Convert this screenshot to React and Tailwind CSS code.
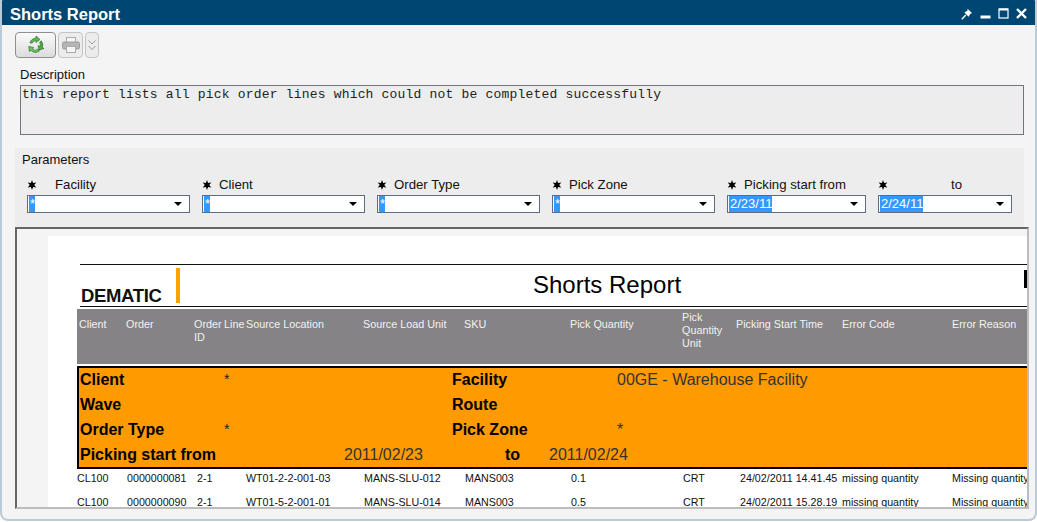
import React from "react";

const params = [
  { label: "Facility", value: "*", labelClass: "ml-[18px]", width: "w-[163px]", gap: "mr-[12px]" },
  { label: "Client", value: "*", labelClass: "ml-[7px]", width: "w-[163px]", gap: "mr-[12px]" },
  { label: "Order Type", value: "*", labelClass: "ml-[7px]", width: "w-[163px]", gap: "mr-[12px]" },
  { label: "Pick Zone", value: "*", labelClass: "ml-[7px]", width: "w-[163px]", gap: "mr-[12px]" },
  { label: "Picking start from", value: "2/23/11", labelClass: "ml-[7px]", width: "w-[139px]", gap: "mr-[12px]" },
  { label: "to", value: "2/24/11", labelClass: "ml-[63px]", width: "w-[134px]", gap: "" },
];

const rows = [
  ["CL100", "0000000081", "2-1", "WT01-2-2-001-03", "MANS-SLU-012", "MANS003", "0.1", "CRT", "24/02/2011 14.41.45", "missing quantity", "Missing quantity"],
  ["CL100", "0000000090", "2-1", "WT01-5-2-001-01", "MANS-SLU-014", "MANS003", "0.5", "CRT", "24/02/2011 15.28.19", "missing quantity", "Missing quantity"],
];

const rowWidths = ["w-[50px]", "w-[70px]", "w-[49px]", "w-[118px]", "w-[101px]", "w-[106px]", "w-[112px]", "w-[57px]", "w-[102px]", "w-[110px]", "w-[76px]"];

const Star = () => (
  <svg width="10" height="10" viewBox="0 0 10 10" className="shrink-0">
    <path d="M5 0 L6.1 3 L9.3 2.5 L7.2 5 L9.3 7.5 L6.1 7 L5 10 L3.9 7 L0.7 7.5 L2.8 5 L0.7 2.5 L3.9 3 Z" fill="#000" />
  </svg>
);

const RefreshIcon = () => (
  <svg width="20" height="20" viewBox="0 0 20 20">
    <path d="M4 8 A6.5 6.5 0 0 1 10 3.2 L10 1 L14 4.5 L10 7.5 L10 5.6 A4 4 0 0 0 6.3 8 Z" fill="#55c13f" stroke="#33663a" strokeWidth="0.7" />
    <path d="M15.2 5.8 A6.5 6.5 0 0 1 16.2 12.6 L18 13.4 L13 15.2 L12.2 10.6 L14 11.5 A4 4 0 0 0 13.6 7.6 Z" fill="#4bb338" stroke="#33663a" strokeWidth="0.7" />
    <path d="M13 16.3 A6.5 6.5 0 0 1 5 15.2 L3.4 16.6 L2.8 11.4 L7.6 12.6 L6.4 13.8 A4 4 0 0 0 12 14.2 Z" fill="#6ad04c" stroke="#33663a" strokeWidth="0.7" />
  </svg>
);

const PrinterIcon = () => (
  <svg width="18" height="16" viewBox="0 0 18 16">
    <rect x="4.5" y="0.5" width="9" height="5" fill="#f6f6f6" stroke="#aaa" />
    <rect x="0.5" y="5" width="17" height="7" rx="1.5" fill="#b5b5b5" stroke="#9c9c9c" />
    <rect x="4.5" y="9.5" width="9" height="6" fill="#f6f6f6" stroke="#aaa" />
  </svg>
);

const ChevronIcon = () => (
  <svg width="8" height="11" viewBox="0 0 8 11" fill="none" stroke="#9a9a9a">
    <path d="M0.5 0.5 L4 4 L7.5 0.5" />
    <path d="M0.5 6 L4 9.5 L7.5 6" />
  </svg>
);

const PinIcon = () => (
  <svg width="12" height="12" viewBox="0 0 12 12">
    <path d="M6.5 0.8 L11.2 5.2 L9.6 5.6 L7.6 8.8 L3.4 4.4 L6.6 2.4 Z" fill="#fff" />
    <path d="M4.8 7 L0.8 11.2" stroke="#fff" strokeWidth="1.4" />
  </svg>
);

const WindowControls = () => (
  <div className="flex items-center mt-[2px]">
    <PinIcon />
    <svg width="11" height="11" viewBox="0 0 11 11" className="ml-[7px]">
      <rect x="0.5" y="7.5" width="10" height="3" fill="#fff" />
    </svg>
    <svg width="11" height="11" viewBox="0 0 11 11" className="ml-[7px]" fill="none" stroke="#fff">
      <rect x="1" y="1" width="9" height="9" strokeWidth="1.2" />
      <path d="M1 1.5 H10" strokeWidth="2" />
    </svg>
    <svg width="11" height="11" viewBox="0 0 11 11" className="ml-[7px]" stroke="#fff" strokeWidth="2.4">
      <path d="M1 1 L10 10 M10 1 L1 10" />
    </svg>
  </div>
);

const Param = ({ label, value, labelClass, width, gap }) => (
  <div className={`${width} ${gap} shrink-0`}>
    <div className="flex items-center h-[15px] text-[13.2px] leading-[15px] text-[#111]">
      <Star />
      <span className={`${labelClass} whitespace-nowrap`}>{label}</span>
    </div>
    <div className="mt-[3px] h-[18px] border border-[#5f6b85] bg-white flex items-center justify-between pl-[1px] pr-[7px]">
      <span className="bg-[#3399ff] text-white h-[16px] leading-[16px] text-[13px] pl-[1px]">{value}</span>
      <span className="w-0 h-0 border-x-[4.5px] border-x-transparent border-t-[4px] border-t-black" />
    </div>
  </div>
);

const OrangeRow = ({ a, b, c, d }) => (
  <div className="flex items-center h-[25px] text-[16px]">
    <span className="w-[144px] font-bold whitespace-nowrap">{a}</span>
    <span className="w-[228px] text-[14px] text-[#222]">{b}</span>
    <span className="w-[165px] font-bold whitespace-nowrap">{c}</span>
    <span className="text-[#333] whitespace-nowrap">{d}</span>
  </div>
);

export default function App() {
  return (
    <div className="font-['Liberation_Sans',Arial,sans-serif] w-[1037px] h-[522px] overflow-hidden bg-white">
      <div className="w-[1037px] h-[521px] bg-[#f4f4f4] border-x-2 border-b-2 border-[#b9cbd6] rounded-b-[8px] flex flex-col overflow-hidden">
        {/* title bar */}
        <div className="-mx-[2px] h-[25px] shrink-0 bg-[#004672] rounded-t-[4px] flex items-center justify-between pl-[10px] pr-[10px] text-white">
          <span className="text-[16.5px] font-bold leading-[20px] pt-[2px]">Shorts Report</span>
          <WindowControls />
        </div>

        {/* toolbar */}
        <div className="flex items-center h-[26px] mt-[7px] ml-[13px] gap-[2px] shrink-0">
          <button className="w-[41px] h-[26px] rounded-[4px] border border-[#8f8f8f] bg-gradient-to-b from-[#fbfbfb] to-[#dcdcdc] flex items-center justify-center">
            <RefreshIcon />
          </button>
          <button className="w-[25px] h-[26px] rounded-[4px] border border-[#c4c4c4] bg-[#ececec] flex items-center justify-center">
            <PrinterIcon />
          </button>
          <button className="w-[14px] h-[26px] rounded-[4px] border border-[#c4c4c4] bg-[#ececec] flex items-center justify-center">
            <ChevronIcon />
          </button>
        </div>

        {/* description */}
        <div className="ml-[18px] mt-[9px] text-[13px] leading-[15px] text-[#111] shrink-0">Description</div>
        <div className="ml-[18px] mt-[3px] w-[1004px] h-[50px] shrink-0 border border-[#6f7680] bg-[#ededed] pl-[1px] font-['Liberation_Mono','Courier_New',monospace] text-[13px] tracking-[0.19px] leading-[17px] text-[#222]">
          this report lists all pick order lines which could not be completed successfully
        </div>

        {/* parameters */}
        <div className="ml-[13px] mt-[13px] w-[1009px] h-[79px] shrink-0 bg-[#ededed] pt-[4px] pl-[7px]">
          <div className="text-[13px] leading-[15px] text-[#111]">Parameters</div>
          <div className="flex mt-[10px] pl-[5px]">
            {params.map((p) => (
              <Param key={p.label} {...p} />
            ))}
          </div>
        </div>

        {/* report viewer */}
        <div className="ml-[13px] w-[1014px] h-[282px] shrink-0 border-2 border-t-[#666] border-l-[#666] border-r-[#bdbdbd] border-b-[#bdbdbd] bg-[#f4f4f4] pt-[7px] pl-[31px] overflow-hidden">
          <div className="bg-white w-[980px] h-[280px] pl-[29px] overflow-hidden">
            <div className="w-[950px]">
              {/* report head */}
              <div className="ml-[3px] mt-[28px] h-[43px] border-t border-b border-[#111] flex relative">
                <span className="self-end ml-[1px] text-[18.5px] leading-[20px] font-bold tracking-[-0.35px] text-[#111] w-[95px]">DEMATIC</span>
                <span className="mt-[3px] h-[35px] w-[4px] bg-[#ffa200]" />
                <span className="ml-[353px] mt-[5px] text-[24px] leading-[30px] text-black whitespace-nowrap">Shorts Report</span>
                <span className="absolute right-0 top-[5px] w-[3px] h-[18px] bg-black" />
              </div>

              {/* column headers */}
              <div className="mt-[2px] h-[55px] bg-[#858385] flex pt-[9px] pl-[2px] text-[10.8px] leading-[13px] text-[#f2f2f2]">
                <span className="w-[47px]">Client</span>
                <span className="w-[68px]">Order</span>
                <span className="w-[30px]">Order ID</span>
                <span className="w-[22px]">Line</span>
                <span className="w-[117px] whitespace-nowrap">Source Location</span>
                <span className="w-[101px] whitespace-nowrap">Source Load Unit</span>
                <span className="w-[106px]">SKU</span>
                <span className="w-[112px] whitespace-nowrap">Pick Quantity</span>
                <span className="w-[54px] -mt-[7px]">Pick Quantity Unit</span>
                <span className="w-[106px] whitespace-nowrap">Picking Start Time</span>
                <span className="w-[110px] whitespace-nowrap">Error Code</span>
                <span className="whitespace-nowrap">Error Reason</span>
              </div>

              {/* filter summary */}
              <div className="mt-[2px] h-[103px] bg-[#ff9a00] border-y-2 border-l-2 border-black pl-[1px] text-black">
                <div className="-mt-[1px]">
                  <OrangeRow a="Client" b="*" c="Facility" d="00GE - Warehouse Facility" />
                  <OrangeRow a="Wave" c="Route" />
                  <OrangeRow a="Order Type" b="*" c="Pick Zone" d="*" />
                  <div className="flex items-center h-[25px] text-[16px]">
                    <span className="w-[264px] font-bold">Picking start from</span>
                    <span className="w-[161px] text-[#333] whitespace-nowrap">2011/02/23</span>
                    <span className="w-[44px] font-bold">to</span>
                    <span className="text-[#333]">2011/02/24</span>
                  </div>
                </div>
              </div>

              {/* data rows */}
              <div className="text-[10.7px] text-[#111] whitespace-nowrap">
                {rows.map((row) => (
                  <div key={row[1]} className="flex h-[24px] pt-[2px] leading-[14px]">
                    {row.map((cell, i) => (
                      <span key={i} className={`${rowWidths[i]} shrink-0`}>{cell}</span>
                    ))}
                  </div>
                ))}
              </div>
            </div>
          </div>
        </div>
      </div>
    </div>
  );
}
